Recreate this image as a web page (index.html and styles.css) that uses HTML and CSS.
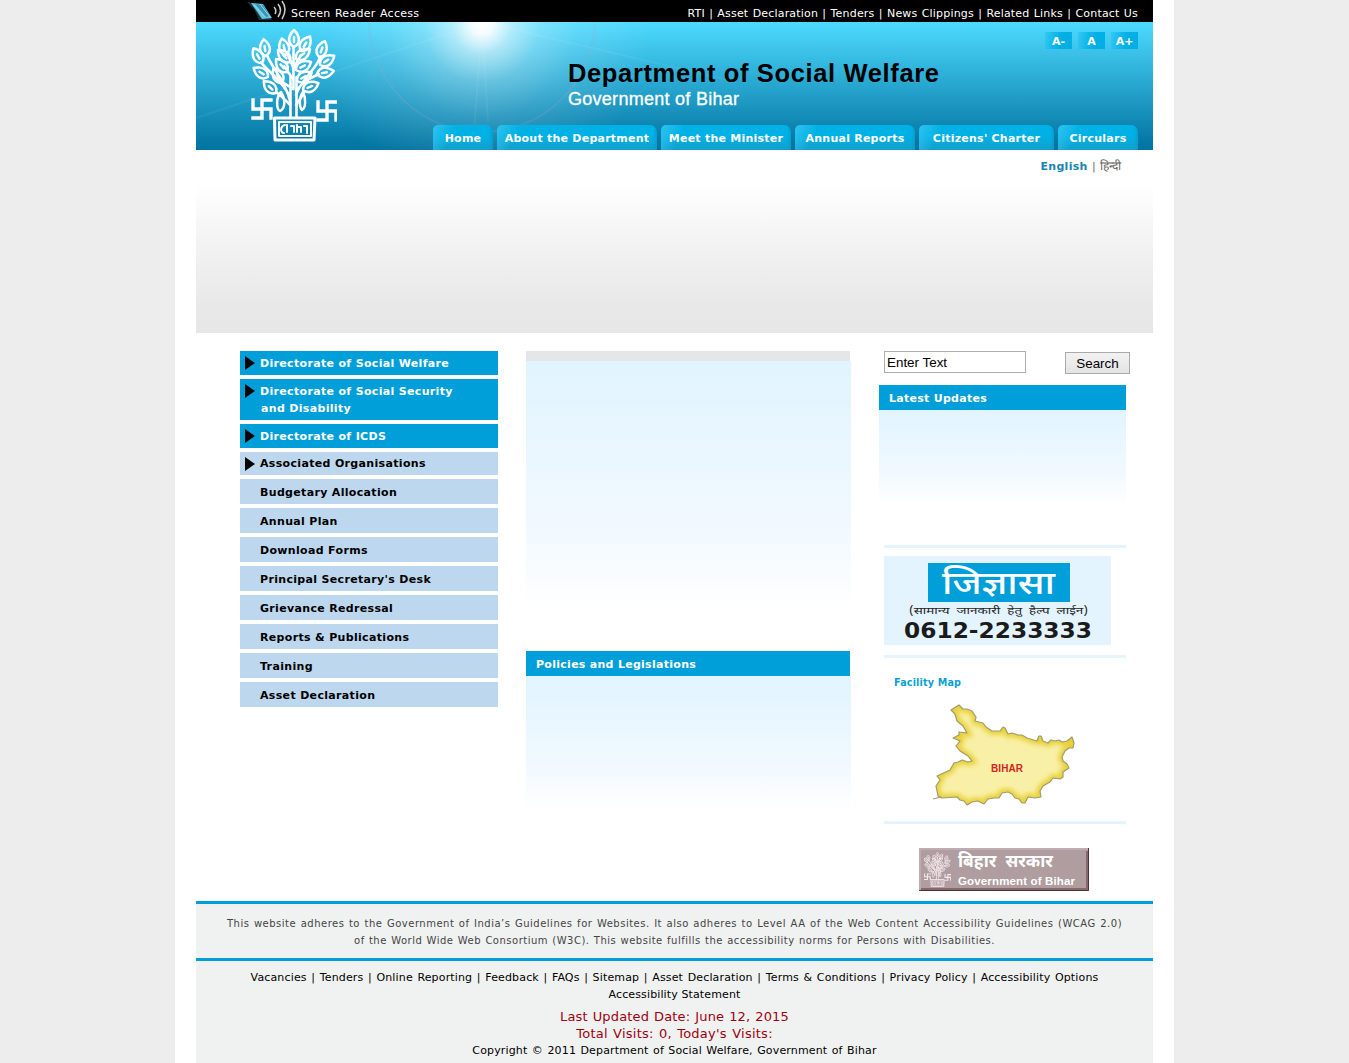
FILE: index.html
```html
<!DOCTYPE html>
<html lang="en">
<head>
<meta charset="utf-8">
<title>Department of Social Welfare, Government of Bihar</title>
<link rel="stylesheet" href="styles.css">
</head>
<body>
<svg width="0" height="0" class="defs" aria-hidden="true">
  <defs>
    <path id="leaf" d="M0 0C-7-4-6-11 0-17C6-11 7-4 0 0ZM0-5V-10"/>
    <symbol id="emblem" viewBox="0 0 86 113">
      <g fill="none" stroke="currentColor" stroke-width="2.5" stroke-linejoin="round" stroke-linecap="round">
        <path d="M39.500 87V48M45.500 87V48M42.500 60V18" stroke-width="2.600"/>
        <path d="M39 72C34 50 20 38 16 26M38 66C30 50 16 42 10 33M39 76C34 70 30 67 25 63M45 66C50 50 66 40 69 28M45 62C54 50 62 48 68 45M45 76L53 64M42 50L33 37M42 40L50 26M42 60L30 52M42 38L36 24" stroke-width="2.600"/>
        <use href="#leaf" transform="translate(43 18)"/>
        <use href="#leaf" transform="translate(35 26) rotate(-14)"/>
        <use href="#leaf" transform="translate(50 22) rotate(32)"/>
        <use href="#leaf" transform="translate(15 27) rotate(-8)"/>
        <use href="#leaf" transform="translate(11 34) rotate(-30)"/>
        <use href="#leaf" transform="translate(17 48) rotate(-58)"/>
        <use href="#leaf" transform="translate(25 64) rotate(-46)"/>
        <use href="#leaf" transform="translate(31 54) rotate(-30)"/>
        <use href="#leaf" transform="translate(36 43) rotate(-40)"/>
        <use href="#leaf" transform="translate(39 33) rotate(-45)"/>
        <use href="#leaf" transform="translate(45 30) rotate(55)"/>
        <use href="#leaf" transform="translate(45 41) rotate(62)"/>
        <use href="#leaf" transform="translate(46 52) rotate(60)"/>
        <use href="#leaf" transform="translate(68 28) rotate(20)"/>
        <use href="#leaf" transform="translate(69 36) rotate(57)"/>
        <use href="#leaf" transform="translate(66 45) rotate(80)"/>
        <use href="#leaf" transform="translate(52 61) rotate(66)"/>
        <path d="M30 63C25 68 25 80 29 82C34 80 35 71 30 63ZM52 63C48 68 48 78 51 81C55 79 55 69 52 63Z"/>
        <path d="M11 71V89M2 80H20M11 71H20M20 80V89M11 89H2M2 80V71M76 73V91M67 82H85M76 73H85M85 82V91M76 91H67M67 82V73" stroke-linecap="square" stroke-width="3.400"/>
        <path d="M23.500 89H64L63 111H24Z" stroke-width="3"/>
        <path d="M28 93H60V107H28Z" stroke-width="2"/>
        <path d="M34 96C29 97 29 104 33 104M36 96V103M40 97H43V103M46 96V103M46 98H50V103M53 97H56V104" stroke-width="2"/>
      </g>
    </symbol>
  </defs>
</svg>
<div class="page">
  <header>
    <div class="topbar">
      <a class="reader">
        <svg width="39" height="22" viewBox="0 0 39 22"><path d="M0 2L7 9L12 20H25L17 5Z" fill="#17333c"/><path d="M4 3L16 4L25 18L15 19Z" fill="#67c4dc"/><path d="M8 4L16 5L23 16L19 17Z" fill="#3895b5"/><path d="M7 5L18 17M13 4L23 17" stroke="#8bdcf0"/><path d="M27 7Q30 10 28 14M31 4Q36 10 31 17M35 1Q41 9 35 19" fill="none" stroke="#ccc" stroke-width="1.5"/></svg>
        <span>Screen Reader Access</span>
      </a>
      <div class="toplinks">RTI | Asset Declaration | Tenders | News Clippings | Related Links | Contact Us</div>
    </div>
    <div class="masthead">
      <svg class="flare" width="957" height="128" viewBox="0 0 957 128">
        <g fill="none" stroke="#fff"><circle cx="286" cy="-3" r="113" stroke="#a99ed0" opacity=".2" stroke-width="2"/><path d="M286 0L278 110M286 0L292 100M286 0L0 96M286 0L540 60" opacity=".06" stroke-width="2"/></g>
      </svg>
      <svg class="emblem" width="86" height="113"><use href="#emblem"/></svg>
      <svg class="title" width="380" height="50" viewBox="0 0 380 50"><text x="0" y="22" class="dept" textLength="371">Department of Social Welfare</text><text x="0" y="45" class="gov" textLength="171">Government of Bihar</text></svg>
      <div class="sizes"><a>A-</a><a>A</a><a>A+</a></div>
      <nav><a class="t1">Home</a><a class="t2">About the Department</a><a class="t3">Meet the Minister</a><a class="t4">Annual Reports</a><a class="t5">Citizens' Charter</a><a class="t6">Circulars</a></nav>
    </div>
  </header>
  <div class="banner"><div class="lang"><b>English</b> | <span>हिन्दी</span></div></div>
  <main>
    <ul class="menu">
      <li class="dir"><i></i>Directorate of Social Welfare</li>
      <li class="dir two"><i></i>Directorate of Social Security<span>and Disability</span></li>
      <li class="dir"><i></i>Directorate of ICDS</li>
      <li class="assoc"><i></i>Associated Organisations</li>
      <li>Budgetary Allocation</li>
      <li>Annual Plan</li>
      <li>Download Forms</li>
      <li>Principal Secretary's Desk</li>
      <li>Grievance Redressal</li>
      <li>Reports &amp; Publications</li>
      <li>Training</li>
      <li>Asset Declaration</li>
    </ul>
    <section class="middle">
      <div class="strip"></div>
      <div class="panel about"></div>
      <h2>Policies and Legislations</h2>
      <div class="panel policies"></div>
    </section>
    <aside>
      <form class="search"><input type="text" value="Enter Text"><button type="button">Search</button></form>
      <h2>Latest Updates</h2>
      <div class="panel updates"></div>
      <hr>
      <svg class="help" width="227" height="89" viewBox="0 0 227 89">
        <rect width="227" height="89" fill="#e3f4fe"/><rect x="44" y="7" width="142" height="39" fill="#009fd9"/>
        <text x="58" y="38" class="jig" textLength="113" lengthAdjust="spacingAndGlyphs">जिज्ञासा</text>
        <text x="25" y="58" class="sub" textLength="179" lengthAdjust="spacingAndGlyphs">(सामान्य&#160; जानकारी&#160; हेतु&#160; हैल्प&#160; लाईन)</text>
        <text x="20" y="82" class="num" textLength="188" lengthAdjust="spacingAndGlyphs">0612-2233333</text>
      </svg>
      <hr>
      <h3>Facility Map</h3>
      <svg class="map" width="146" height="106" viewBox="0 0 146 106">
        <defs>
          <path id="state" d="M19 7L22 5L27 2L31 6L35 6L40 8L44 14L43 18L51 20L54 24L60 28L68 28L71 24L73 25L76 31L80 30L86 32L90 32L95 35L105 38L107 33L109 33L111 38L116 40L119 37L123 38L127 37L130 39L135 38L140 34L142 40L141 45L137 45L133 48L130 54L131 58L135 61L137 65L131 69L131 74L128 76L121 75L118 79L111 83L108 88L109 94L103 95L96 94L93 100H90L87 96L83 95L80 91L76 89L70 90L67 95L62 95L56 96L52 101L46 98L40 99L35 102L32 98L28 97L25 94L10 95L6 93L4 83L8 77L5 73L18 67L22 60L26 59L30 57L36 59L40 58L36 53L28 48L24 43L28 38L21 35L27 32V29L35 30L31 23L25 18L23 11Z"/>
          <clipPath id="inside"><use href="#state"/></clipPath>
          <filter id="soft"><feGaussianBlur stdDeviation="2.5"/></filter>
        </defs>
        <use href="#state" class="land"/>
        <g clip-path="url(#inside)"><use href="#state" class="glow" filter="url(#soft)"/></g>
        <use href="#state" class="coast"/><path class="coast" d="M1 96L9 94"/>
        <text x="59" y="69" class="bihar" textLength="32">BIHAR</text>
      </svg>
      <hr>
      <svg class="badge" width="170" height="43" viewBox="0 0 170 43"><rect width="170" height="43" fill="#b09da0"/><path d="M0 1H170M1 0V43" stroke="#bdadb0" stroke-width="2"/><path d="M0 42.500H169.500V0" fill="none" stroke="#4b3438"/><path d="M2 41H168V3" fill="none" stroke="#86686d" stroke-width="2"/><svg class="small" x="5" y="4" width="27" height="35" viewBox="0 0 86 113" preserveAspectRatio="none"><use href="#emblem"/></svg><text x="39" y="19" class="bh" textLength="95" lengthAdjust="spacingAndGlyphs">बिहार&#160; सरकार</text><text x="39" y="37" class="bg" textLength="117">Government of Bihar</text></svg>
    </aside>
  </main>
  <footer>
    <p class="access"><span class="f1">This website adheres to the Government of India’s Guidelines for Websites. It also adheres to Level AA of the Web Content Accessibility Guidelines (WCAG 2.0)</span><span class="f2">of the World Wide Web Consortium (W3C). This website fulfills the accessibility norms for Persons with Disabilities.</span></p>
    <div class="bottom">
      <span class="f3">Vacancies | Tenders | Online Reporting | Feedback | FAQs | Sitemap | Asset Declaration | Terms &amp; Conditions | Privacy Policy | Accessibility Options</span>
      <span class="f4">Accessibility Statement</span>
      <span class="red updated">Last Updated Date: June 12, 2015</span>
      <span class="red visits">Total Visits: 0, Today's Visits:</span>
      <span class="copy">Copyright © 2011 Department of Social Welfare, Government of Bihar</span>
    </div>
  </footer>
</div>
</body>
</html>
```
FILE: styles.css
```css
*{box-sizing:border-box}
body{margin:0;background:#ededed;font:11px/17px Verdana,"DejaVu Sans",sans-serif;color:#000;height:1063px;overflow:hidden}
.defs{position:absolute}
.page{width:999px;height:1063px;margin-left:175px;padding:0 21px;background:#fff}
svg{display:block}
.topbar{height:22px;background:#000;color:#fff;display:flex;justify-content:space-between;padding:0 15px 0 51px;white-space:nowrap}
.reader{display:flex;gap:5px}
.reader span,.toplinks{padding-top:5px}
.reader span{letter-spacing:.3px;word-spacing:.5px}
.toplinks{letter-spacing:.18px;word-spacing:.65px}
.masthead{height:128px;position:relative;background:radial-gradient(circle at 286px 2px,#fff 0,#fffffff0 10px,#ffffff90 30px,#ffffff48 58px,#ffffff20 95px,#fff0 170px),linear-gradient(#4edaff,#00729f);display:grid;grid-template-columns:55px 86px 231px 1fr;grid-template-rows:103px 25px}
.flare{position:absolute;left:0;top:0}
.emblem{grid-column:2;grid-row:1/3;margin-top:7px;color:#fff;z-index:1}
.title{grid-column:4;grid-row:1;margin-top:38px;z-index:1}
.title text{font-family:Arial,"Liberation Sans",sans-serif}
.dept{font-size:25.5px;font-weight:700}
.gov{font-size:18px;fill:#fff;stroke:#fff;stroke-width:.3px}
.sizes{position:absolute;right:15px;top:10px;display:flex;gap:6px}
.sizes a{width:27px;height:17px;text-align:center;color:#fff;font-weight:700;line-height:19px;background:linear-gradient(100deg,#35c8f2 0,#12b8ec 35%,#02afe4 60%)}
nav{grid-column:1/5;grid-row:2;display:flex;gap:4px;padding-left:237px;z-index:1}
nav a{height:25px;line-height:27px;letter-spacing:.24px;text-align:center;color:#fff;font-weight:700;white-space:nowrap;border-radius:5px 7px 0 0;background:linear-gradient(115deg,#47cbf6aa,#08bdf800 22px),linear-gradient(90deg,#0000 calc(100% - 4px),#0b8fbe88),linear-gradient(#00b1e5 45%,#149fcb)}
.t1{width:60px}.t2{width:160px}.t3{width:130px}.t4{width:120px}.t5{width:135px}.t6{width:80px}
.banner{height:183px;background:linear-gradient(#fff 34px,#f3f3f3 92px,#e9e9e9 150px,#e6e6e6);padding:8px 32px 0 0;text-align:right;color:#666}
.lang{height:17px;word-spacing:.8px}
.lang b{color:#1985b1;letter-spacing:.3px}
.lang span{font-size:12px;line-height:1}
main{height:568px;padding:18px 23px 0 44px;display:grid;grid-template-columns:258px 325px 251px;column-gap:28px;align-items:start}
.menu{list-style:none;margin:0;padding:0;display:flex;flex-direction:column;gap:4px;font-weight:700;letter-spacing:.33px}
.menu li{height:25px;background:#bdd8ee;padding:5px 0 0 20px;position:relative}
.menu .dir{height:24px;background:#009fd9;color:#fff;padding-top:4px}
.menu .two{height:41px}
.menu .two span{display:block;padding-left:1px}
.menu .assoc{height:23px;padding-top:3px}
.menu i{position:absolute;left:5px;top:5px;border-left:10px solid #050505;border-top:7px solid transparent;border-bottom:7px solid transparent}
.strip{width:324px;height:10px;background:#e5e6e7}
.panel{background:linear-gradient(#e1f4fe,#e8f6ff 30%,#f1f9ff 65%,#fff)}
.about{height:251px;margin-bottom:39px}
.policies{height:136px}
h2{width:324px;height:25px;margin:0;background:#009fd9;color:#fff;font-size:11px;line-height:27px;letter-spacing:.28px;padding-left:10px}
aside h2,.updates{width:247px}
aside hr{width:242px;height:3px;margin:0 0 0 5px;border:0;background:#e6f4fe}
.search{display:flex;justify-content:space-between;align-items:flex-start;padding-left:5px;height:34px}
.search input{width:142px;height:22px;border:1px solid #abadb3;border-radius:0;padding:1px 2px;font:13.4px Arial,"Liberation Sans",sans-serif}
.search button{width:65px;height:22px;margin-top:1px;border:1px solid #aaa;border-radius:0;background:linear-gradient(#f2f2f2,#e4e4e4);padding:0;font:13.4px Arial,"Liberation Sans",sans-serif}
.updates{height:96px;margin-bottom:39px}
.help{margin:8px 0 10px 5px}
.jig{font:500 32px "Noto Sans Devanagari","Noto Sans",sans-serif;fill:#fff}
.sub{font:10px "Noto Sans Devanagari","Noto Sans",sans-serif;fill:#222}
.num{font:700 22px Verdana,"DejaVu Sans",sans-serif;fill:#1c1a1b}
h3{margin:16px 0 12px 15px;font-size:9.6px;line-height:17px;letter-spacing:.17px;color:#0a9fd4}
.map{margin:0 0 12px 53px}
.land{fill:#f9f0a7}
.glow{fill:none;stroke:#e6cf31;stroke-width:7}
.coast{fill:none;stroke:#a09b72;stroke-width:1.2;stroke-linejoin:round}
.bihar{font:700 10px Arial,"Liberation Sans",sans-serif;fill:#d52520}
.badge{margin:24px 0 0 40px}
.small{color:#f4e8ea}
.bh{font:700 17px "Noto Sans Devanagari","Noto Sans",sans-serif;fill:#fff}
.bg{font:700 11.5px Arial,"Liberation Sans",sans-serif;fill:#fff}
footer{height:162px;background:#f0f2f1;text-align:center;white-space:nowrap}
footer span{display:block}
.access{height:60px;margin:0;border:solid #009fd9;border-width:3px 0;padding-top:11px;font-size:10px;color:#444}
.f1{letter-spacing:.5px;word-spacing:.85px}
.f2{letter-spacing:.5px;word-spacing:.6px}
.bottom{padding-top:8px}
.f3{letter-spacing:.15px;word-spacing:.95px}
.f4{letter-spacing:.12px}
.red{font-size:13px;color:#a00010}
.updated{margin-top:5px;letter-spacing:.15px;word-spacing:.7px}
.visits{letter-spacing:.25px;word-spacing:.9px}
.copy{letter-spacing:.15px;word-spacing:.8px}
```
